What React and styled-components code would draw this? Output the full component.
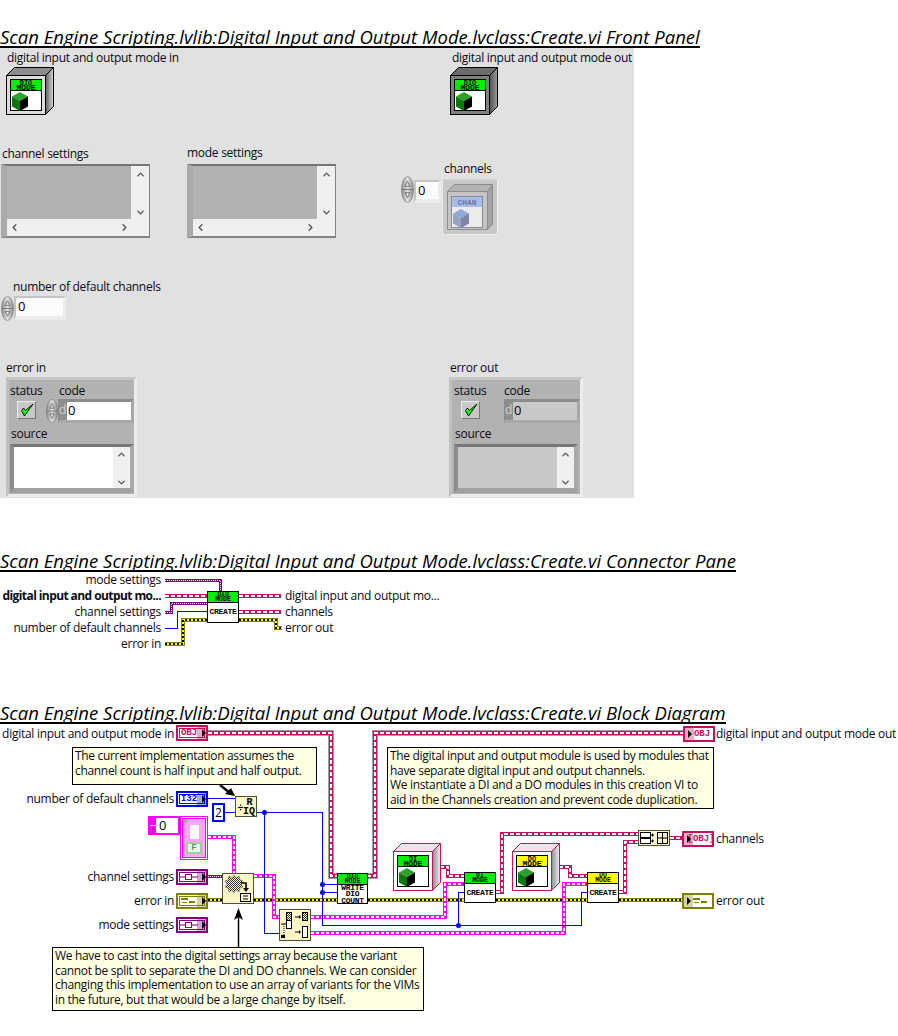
import React from 'react';
import styled, { createGlobalStyle } from 'styled-components';
import { ChevronUp, ChevronDown, ChevronLeft, ChevronRight } from 'lucide-react';

const GlobalStyle = createGlobalStyle`
	html, body { margin: 0; padding: 0; background: #fff; }
	body { font-family: 'Open Sans', 'Noto Sans', sans-serif; color: #0a0a14; }
`;

const PINK = '#c4105f';
const MAGENTA = '#ff00ff';
const PURPLE = '#800080';
const OLIVE = '#808000';
const BLUE = '#0000ff';

const wireKinds = {
	blue: [{ stroke: BLUE, width: 1 }],
	chain: [{ stroke: PINK, width: 4 }, { stroke: '#fff', width: 2, dash: '4 2' }],
	classBig: [
		{ stroke: '#a0a0a0', width: 6 },
		{ stroke: PINK, width: 4 },
		{ stroke: '#fff', width: 2, dash: '4 2' }
	],
	magenta: [{ stroke: MAGENTA, width: 4 }, { stroke: '#fff', width: 2, dash: '3 2' }],
	purple: [{ stroke: PURPLE, width: 3 }, { stroke: '#fff', width: 1, dash: '1 1' }],
	error: [
		{ stroke: OLIVE, width: 4 },
		{ stroke: '#ffff00', width: 2 },
		{ stroke: '#000', width: 2, dash: '2 2' }
	]
};

const Page = styled.div`
	width: 898px;
	height: 1036px;
	overflow: hidden;
	background: #fff;
	display: flex;
	flex-direction: column;
	align-items: flex-start;
`;

const Title = styled.h2`
	margin: ${({ $top }) => $top}px 0 0;
	height: 20px;
	font-size: 18.5px;
	line-height: 22px;
	font-weight: 400;
	font-style: italic;
	font-family: 'Open Sans', sans-serif;
	letter-spacing: 0.02px;
	white-space: nowrap;
	color: #000;
	border-bottom: 2px solid #000;
`;

const FrontPanel = styled.section`
	position: relative;
	width: 634px;
	height: 450px;
	background: #e1e1e1;
`;

const Canvas = styled.section`
	position: relative;
	width: 898px;
	height: ${({ $height }) => $height}px;
`;

const WireLayer = styled.svg`
	position: absolute;
	left: 0;
	top: 0;
	width: 100%;
	height: 100%;
`;

const Label = styled.div`
	position: absolute;
	left: ${({ $x }) => $x}px;
	top: ${({ $y }) => $y - 8}px;
	font-size: 12px;
	line-height: 16px;
	letter-spacing: ${({ $bold }) => ($bold ? -0.58 : -0.28)}px;
	white-space: nowrap;
	font-weight: ${({ $bold }) => ($bold ? 700 : 400)};
	transform: ${({ $right }) => ($right ? 'translateX(-100%)' : 'none')};
`;

const Placed = styled.div`
	position: absolute;
	left: ${({ $x }) => $x}px;
	top: ${({ $y }) => $y}px;
	line-height: 0;
`;

/* array shell with scrollbars */
const ArrayBox = styled.div`
	position: absolute;
	left: ${({ $x }) => $x}px;
	top: ${({ $y }) => $y}px;
	width: 149px;
	height: 74px;
	box-sizing: border-box;
	display: grid;
	grid-template-columns: 1fr 18px;
	grid-template-rows: 1fr 17px;
	background: #f0f0f0;
	border: solid #848484;
	border-width: 2px 1px 2px 6px;
	border-left-color: #aaaaaa;
	border-top-color: #747474;
`;

const ArrayData = styled.div`
	background: #b2b2b2;
`;

const ScrollV = styled.div`
	display: flex;
	flex-direction: column;
	justify-content: space-between;
	align-items: center;
	color: #555;
	padding: 3px 0 1px;
	line-height: 0;
`;

const ScrollH = styled.div`
	grid-column: 1 / 3;
	display: flex;
	justify-content: space-between;
	align-items: center;
	color: #555;
	padding: 0 19px 0 2px;
	line-height: 0;
`;

const NumericBox = styled.div`
	position: absolute;
	left: ${({ $x }) => $x}px;
	top: ${({ $y }) => $y}px;
	width: ${({ $w }) => $w}px;
	height: ${({ $h }) => $h}px;
	box-sizing: border-box;
	background: #fbfbfb;
	border: solid;
	border-width: 2px 3px 4px 2px;
	border-color: #c4c4c4 #ececec #ececec #c4c4c4;
	font-size: 13px;
	line-height: 16px;
	padding-left: 2px;
	color: #000;
`;

const ChannelFrame = styled.div`
	position: absolute;
	left: 442px;
	top: 131px;
	width: 56px;
	height: 56px;
	box-sizing: border-box;
	padding: 4px;
	line-height: 0;
	background: #c8c8c8;
	border: 1px solid #ececec;
	border-top-color: #d2d2d2;
`;

/* error cluster */
const ErrorFrame = styled.div`
	position: absolute;
	left: ${({ $x }) => $x}px;
	top: 329px;
	width: ${({ $w }) => $w}px;
	height: 120px;
	box-sizing: border-box;
	background: #b2b2b2;
	border: 3px solid;
	border-color: #c6c6c6 #ececec #ececec #c0c0c0;
	padding: 3px 0 0 ${({ $pad }) => $pad}px;
	display: grid;
	grid-template-columns: 36px 1fr;
	grid-template-rows: 16px 24px 21px 1fr;
	font-size: 12px;
	letter-spacing: -0.25px;
	line-height: 16px;
`;

const Cap = styled.div`
	padding-left: ${({ $indent }) => $indent || 0}px;
	white-space: nowrap;
`;

const CheckButton = styled.div`
	width: 19px;
	height: 18px;
	margin: 2px 0 0 7px;
	box-sizing: border-box;
	background: #c8c8c8;
	border: 1px solid;
	border-color: #eee #777 #777 #eee;
	display: flex;
	align-items: center;
	justify-content: center;
`;

const CodeRow = styled.div`
	display: flex;
	align-items: flex-start;
	margin-left: ${({ $indent }) => $indent || 0}px;
`;

const CodeBox = styled.div`
	width: 76px;
	height: 24px;
	box-sizing: border-box;
	display: flex;
	border: solid;
	border-width: 3px 3px 3px 1px;
	border-color: #8c8c8c #a8a8a8 #a8a8a8 #8c8c8c;
	font-size: 13px;
	line-height: 16px;
	color: #000;
`;

const RadixTag = styled.span`
	width: 8px;
	background: #8f8f8f;
	color: #cfcfcf;
	font-size: 12px;
`;

const CodeValue = styled.span`
	flex: 1;
	padding-left: 1px;
	background: ${({ $fill }) => $fill};
`;

const SourceCap = styled(Cap)`
	grid-column: 1 / 3;
	padding-left: 1px;
	padding-top: 3px;
`;

const SourceBox = styled.div`
	grid-column: 1 / 3;
	width: 124px;
	height: 49px;
	box-sizing: border-box;
	display: flex;
	justify-content: flex-end;
	background: ${({ $fill }) => $fill};
	border: solid;
	border-width: 3px 4px 5px 4px;
	border-color: #777 #a8a8a8 #a0a0a0 #8c8c8c;
`;

const SourceScroll = styled(ScrollV)`
	width: 17px;
	background: #f0f0f0;
	padding: 2px 0 0;
`;

/* LabVIEW nodes */
const ViNode = styled.div`
	position: absolute;
	left: ${({ $x }) => $x}px;
	top: ${({ $y }) => $y}px;
	width: ${({ $w }) => $w || 32}px;
	height: ${({ $h }) => $h || 32}px;
	box-sizing: border-box;
	border: 1px solid #000;
	background: #fff;
	display: flex;
	flex-direction: column;
	font-family: 'Liberation Mono', monospace;
	color: #000;
`;

const ViHead = styled.div`
	height: 11px;
	flex: none;
	box-sizing: border-box;
	overflow: hidden;
	background: ${({ $color }) => $color};
	border-bottom: 1px solid #000;
	font-size: 6.5px;
	font-weight: 700;
	line-height: 5px;
	text-align: center;
`;

const ViBody = styled.div`
	flex: 1;
	display: flex;
	align-items: center;
	justify-content: center;
	text-align: center;
	font-size: 8px;
	line-height: 6.3px;
	font-weight: 700;
	letter-spacing: -0.3px;
`;

const PrimNode = styled.div`
	position: absolute;
	left: ${({ $x }) => $x}px;
	top: ${({ $y }) => $y}px;
	width: ${({ $w }) => $w}px;
	height: ${({ $h }) => $h}px;
	box-sizing: border-box;
	background: #fbf7c8;
	border: 1px solid #505030;
	line-height: 0;
	font-family: 'Liberation Mono', monospace;
`;

const Terminal = styled.div`
	position: absolute;
	left: ${({ $x }) => $x}px;
	top: ${({ $y }) => $y}px;
	width: 32px;
	height: 16px;
	box-sizing: border-box;
	border: 2px solid ${({ $color }) => $color};
	background: #fff;
	color: ${({ $color }) => $color};
	display: flex;
	align-items: center;
	justify-content: center;
	padding: ${({ $indicator }) => ($indicator ? '0 0 0 6px' : '0 6px 0 0')};
	font-family: 'Liberation Mono', monospace;
	font-size: 9px;
	font-weight: 700;
	line-height: 0;
	overflow: hidden;
	&::before {
		content: '';
		position: absolute;
		inset: 1px;
		border: 1px solid ${({ $color, $indicator }) => ($indicator ? 'transparent' : $color)};
	}
`;

const TerminalShade = styled.span`
	position: absolute;
	top: 0;
	bottom: 0;
	width: 9px;
	${({ $indicator }) => ($indicator ? 'left: 0;' : 'right: 0;')}
	background: ${({ $color }) => $color};
	opacity: 0.35;
`;

const TerminalArrow = styled.span`
	position: absolute;
	top: 50%;
	margin-top: -4px;
	${({ $indicator }) => ($indicator ? 'left: 3px;' : 'right: 0;')}
	border-style: solid;
	border-width: 4px 0 4px 4px;
	border-color: transparent transparent transparent #000;
`;

const Note = styled.div`
	position: absolute;
	left: ${({ $x }) => $x}px;
	top: ${({ $y }) => $y}px;
	width: ${({ $w }) => $w}px;
	height: ${({ $h }) => $h}px;
	box-sizing: border-box;
	background: #ffffe1;
	border: 1px solid #000;
	padding: 1px 2px;
	font-size: 12px;
	line-height: 14.7px;
	letter-spacing: -0.32px;
	color: #0a0a14;
	white-space: pre;
`;

const ConstTwo = styled.div`
	position: absolute;
	left: 212px;
	top: 79px;
	width: 13px;
	height: 19px;
	box-sizing: border-box;
	border: 2px solid ${BLUE};
	background: #fff;
	font-size: 12px;
	line-height: 15px;
	text-align: center;
	color: #000;
`;

const ConstIndex = styled.div`
	position: absolute;
	left: 148px;
	top: 92px;
	width: 32px;
	height: 19px;
	box-sizing: border-box;
	border: 2px solid ${MAGENTA};
	background: #fff;
	display: flex;
	align-items: center;
	font-size: 13px;
	line-height: 15px;
	color: #000;
`;

const IndexSpin = styled.span`
	width: 6px;
	height: 15px;
	margin-right: 3px;
	background: linear-gradient(${MAGENTA} 45%, #fff 45%, #fff 55%, ${MAGENTA} 55%);
`;

const ConstArray = styled.div`
	position: absolute;
	left: 180px;
	top: 92px;
	width: 28px;
	height: 44px;
	box-sizing: border-box;
	border: 1px solid ${MAGENTA};
	padding: 1px;
	background: #fff;
`;

const ConstCluster = styled.div`
	position: relative;
	height: 100%;
	box-sizing: border-box;
	border: 1px solid ${MAGENTA};
	background: #fba6fb;
	padding: 6px 4px 3px;
	display: flex;
	flex-direction: column;
	align-items: center;
	gap: 3px;
`;

const ConstCorner = styled.span`
	position: absolute;
	left: 0;
	top: 0;
	border-style: solid;
	border-width: 7px 7px 0 0;
	border-color: #a8a8a8 transparent transparent transparent;
`;

const ConstWhite = styled.span`
	width: 9px;
	flex: 1;
	background: #fff;
`;

const ConstBool = styled.span`
	width: 16px;
	height: 12px;
	box-sizing: border-box;
	border: 2px solid #9ccf9c;
	background: #e8f4e8;
	color: #5a9a5a;
	font-family: 'Liberation Mono', monospace;
	font-size: 9px;
	font-weight: 700;
	line-height: 8px;
	text-align: center;
`;

const Wire = ({ kind, points }) => (
	<>
		{wireKinds[kind].map((layer, i) => (
			<polyline
				key={i}
				points={points.map(p => p.join(',')).join(' ')}
				fill="none"
				stroke={layer.stroke}
				strokeWidth={layer.width}
				strokeDasharray={layer.dash}
				shapeRendering="crispEdges"
			/>
		))}
	</>
);

const Spinner = ({ w = 13, h = 26 }) => (
	<svg width={w} height={h} viewBox="0 0 13 26" preserveAspectRatio="none">
		<defs>
			<linearGradient id="spin" x1="0" x2="1" y1="0" y2="0">
				<stop offset="0" stopColor="#8a8a8a" />
				<stop offset="0.5" stopColor="#e2e2e2" />
				<stop offset="1" stopColor="#8a8a8a" />
			</linearGradient>
		</defs>
		<ellipse cx="6.5" cy="13" rx="6" ry="12.5" fill="url(#spin)" stroke="#777" strokeWidth="0.6" />
		<path d="M0.8 13H12.2" stroke="#777" strokeWidth="1" />
		<path d="M6.5 5L9 10H4Z M6.5 21L9 16H4Z" fill="none" stroke="#666" strokeWidth="0.8" />
	</svg>
);

const Cube = ({ tone = 'green' }) => {
	const colors = {
		green: ['#2ea02e', '#0a780a', '#000'],
		blue: ['#8fa8dc', '#9aa2c4', '#7d84a4']
	}[tone];
	return (
		<>
			<polygon points="14,25 22,29.5 14,34 6,29.5" fill={colors[0]} />
			<polygon points="6,29.5 14,34 14,44 6,39.5" fill={colors[1]} />
			<polygon points="22,29.5 14,34 14,44 22,39.5" fill={colors[2]} />
		</>
	);
};

// the 3D class control or constant, face 40 square, 8 deep
const ClassIcon = ({ variant = 'light', head = '#00f000', line1 = 'DIO', line2 = 'MODE', id }) => {
	const look = {
		light: { edge: '#000', face: '#dcdcdc', top: '#8c8c8c', sideA: '#606060', sideB: '#d8d8d8' },
		dark: { edge: '#000', face: '#808080', top: '#6c6c6c', sideA: '#505050', sideB: '#9c9c9c' },
		constant: { edge: PINK, face: '#fff', top: '#f0e4e8', sideA: '#8c8c8c', sideB: '#f0f0f0' }
	}[variant];
	return (
		<svg width="48" height="48" viewBox="0 0 48 48">
			<defs>
				<linearGradient id={id} x1="0" x2="1" y1="0" y2="0">
					<stop offset="0" stopColor={look.sideA} />
					<stop offset="1" stopColor={look.sideB} />
				</linearGradient>
			</defs>
			<polygon points="0.5,8.5 8.5,0.5 47.5,0.5 39.5,8.5" fill={look.top} stroke={look.edge} />
			<polygon points="39.5,8.5 47.5,0.5 47.5,39.5 39.5,47.5" fill={`url(#${id})`} stroke={look.edge} />
			<rect x="0.5" y="8.5" width="39" height="39" fill={look.face} stroke={look.edge} />
			<rect x="4.5" y="12.5" width="31" height="31" fill="#fff" stroke="#000" />
			<rect x="5" y="13" width="30" height="10" fill={head} />
			<path d="M5 23.5H35" stroke="#000" />
			<text x="20" y="17.5" textAnchor="middle" fontFamily="Liberation Mono" fontSize="7" fontWeight="700">{line1}</text>
			<text x="20" y="23" textAnchor="middle" fontFamily="Liberation Mono" fontSize="8" fontWeight="700">{line2}</text>
			<Cube />
		</svg>
	);
};

const ChannelIcon = () => (
	<svg width="46" height="46" viewBox="0 0 46 46">
		<polygon points="0.5,7.5 7.5,0.5 45.5,0.5 40.5,7.5" fill="#b4b4b4" stroke="#8c8c8c" />
		<polygon points="40.5,7.5 45.5,0.5 45.5,40.5 40.5,45.5" fill="#a4a4a4" stroke="#8c8c8c" />
		<rect x="0.5" y="7.5" width="40" height="38" fill="#c4c4c4" stroke="#8c8c8c" />
		<rect x="4.5" y="12.5" width="31" height="31" fill="#ececec" stroke="#8c8c8c" />
		<rect x="5" y="13" width="30" height="10" fill="#a8bcec" />
		<text x="20" y="21" textAnchor="middle" fontFamily="Liberation Mono" fontSize="8" fontWeight="700" fill="#6c7c9c">CHAN</text>
		<Cube tone="blue" />
	</svg>
);

const Chevron = ({ as: Icon, size = 11 }) => <Icon size={size} strokeWidth={3} />;

const ScrollArray = ({ x, y }) => (
	<ArrayBox $x={x} $y={y}>
		<ArrayData />
		<ScrollV>
			<Chevron as={ChevronUp} />
			<Chevron as={ChevronDown} />
		</ScrollV>
		<ScrollH>
			<Chevron as={ChevronLeft} />
			<Chevron as={ChevronRight} />
		</ScrollH>
	</ArrayBox>
);

const ErrorCluster = ({ x, w, pad, indicator }) => (
	<ErrorFrame $x={x} $w={w} $pad={pad}>
		<Cap>status</Cap>
		<Cap $indent={indicator ? 14 : 13}>code</Cap>
		<CheckButton>
			<svg width="14" height="14" viewBox="0 0 14 14">
				<path d="M1.5 7.5L4.5 13 13 1 5.5 7.5 3.5 5Z" fill="#00ff00" stroke="#000" strokeWidth="0.9" strokeLinejoin="round" />
			</svg>
		</CheckButton>
		<CodeRow $indent={indicator ? 14 : 0}>
			{!indicator && <Spinner w={12} h={24} />}
			<CodeBox>
				<RadixTag>d</RadixTag>
				<CodeValue $fill={indicator ? '#c8c8c8' : '#fff'}>0</CodeValue>
			</CodeBox>
		</CodeRow>
		<SourceCap>source</SourceCap>
		<SourceBox $fill={indicator ? '#c8c8c8' : '#fff'}>
			<SourceScroll>
				<Chevron as={ChevronUp} />
				<Chevron as={ChevronDown} />
			</SourceScroll>
		</SourceBox>
	</ErrorFrame>
);

const Vi = ({ x, y, h = 32, w = 32, head = '#00f000', line1 = 'DIO', line2 = 'MODE', children }) => (
	<ViNode $x={x} $y={y} $w={w} $h={h}>
		<ViHead $color={head}>
			{line1}
			<br />
			{line2}
		</ViHead>
		<ViBody>{children}</ViBody>
	</ViNode>
);

const Term = ({ x, y, color, indicator, children }) => (
	<Terminal $x={x} $y={y} $color={color} $indicator={indicator}>
		{children}
		<TerminalShade $color={color} $indicator={indicator} />
		<TerminalArrow $indicator={indicator} />
	</Terminal>
);

const VariantGlyph = () => (
	<svg width="20" height="8" viewBox="0 0 20 8">
		<path d="M1 4H6 M13 4H19" stroke={PURPLE} />
		<rect x="6.5" y="1.5" width="6" height="5" fill="#fff" stroke={PURPLE} />
	</svg>
);

const ErrorGlyph = () => (
	<svg width="18" height="8" viewBox="0 0 18 8">
		<path d="M1 1H8V3H1Z M9 4H15V6H9Z M2 5H7V6H2Z" fill={OLIVE} />
	</svg>
);

const ConnectorPane = () => (
	<Canvas $height={84}>
		<WireLayer>
			<Wire kind="purple" points={[[165, 8.5], [220.5, 8.5], [220.5, 19]]} />
			<Wire kind="chain" points={[[165, 24], [207, 24]]} />
			<Wire kind="purple" points={[[165, 40.5], [171.5, 40.5], [171.5, 31.5], [207, 31.5]]} />
			<Wire kind="blue" points={[[165, 56.5], [177.5, 56.5], [177.5, 39.5], [207, 39.5]]} />
			<Wire kind="error" points={[[165, 72], [183, 72], [183, 48], [207, 48]]} />
			<Wire kind="chain" points={[[239, 24], [281, 24]]} />
			<Wire kind="chain" points={[[239, 40], [281, 40]]} />
			<Wire kind="error" points={[[239, 48], [276, 48], [276, 56], [282, 56]]} />
		</WireLayer>
		<Label $x={161} $y={8} $right>mode settings</Label>
		<Label $x={161} $y={24} $right $bold>digital input and output mo...</Label>
		<Label $x={161} $y={40} $right>channel settings</Label>
		<Label $x={161} $y={56} $right>number of default channels</Label>
		<Label $x={161} $y={72} $right>error in</Label>
		<Vi x={207} y={19}>CREATE</Vi>
		<Label $x={285} $y={24}>digital input and output mo...</Label>
		<Label $x={285} $y={40}>channels</Label>
		<Label $x={285} $y={56}>error out</Label>
	</Canvas>
);

const BlockDiagram = () => (
	<Canvas $height={312}>
		<WireLayer>
			<Wire kind="classBig" points={[[208, 9], [331, 9], [331, 152], [337, 152]]} />
			<Wire kind="classBig" points={[[367, 152], [375, 152], [375, 9], [683, 9]]} />
			<Wire kind="chain" points={[[440, 143], [448, 143], [448, 152], [464, 152]]} />
			<Wire kind="chain" points={[[496, 168], [502, 168], [502, 110], [638, 110]]} />
			<Wire kind="chain" points={[[559, 143], [570, 143], [570, 152], [587, 152]]} />
			<Wire kind="chain" points={[[619, 168], [625, 168], [625, 118], [638, 118]]} />
			<Wire kind="chain" points={[[670, 114], [682, 114]]} />
			<Wire kind="purple" points={[[208, 152.5], [222, 152.5]]} />
			<Wire kind="error" points={[[208, 176], [222, 176]]} />
			<Wire kind="error" points={[[254, 176], [337, 176]]} />
			<Wire kind="error" points={[[368, 176], [464, 176]]} />
			<Wire kind="error" points={[[496, 176], [587, 176]]} />
			<Wire kind="error" points={[[619, 176], [682, 176]]} />
			<Wire kind="magenta" points={[[208, 113], [234, 113], [234, 149]]} />
			<Wire kind="magenta" points={[[254, 152], [274, 152], [274, 193], [279, 193]]} />
			<Wire kind="magenta" points={[[311, 193], [445, 193], [445, 160], [464, 160]]} />
			<Wire kind="magenta" points={[[311, 209], [564, 209], [564, 160], [587, 160]]} />
			<Wire kind="blue" points={[[208, 74.5], [235, 74.5]]} />
			<Wire kind="blue" points={[[225, 88.5], [235, 88.5]]} />
			<Wire kind="blue" points={[[257, 88.5], [322.5, 88.5], [322.5, 201.5], [581.5, 201.5], [581.5, 168.5], [587, 168.5]]} />
			<Wire kind="blue" points={[[458.5, 201.5], [458.5, 168.5], [464, 168.5]]} />
			<Wire kind="blue" points={[[264.5, 88.5], [264.5, 209.5], [279, 209.5]]} />
			<Wire kind="blue" points={[[322.5, 160.5], [337, 160.5]]} />
			<Wire kind="blue" points={[[322.5, 168.5], [337, 168.5]]} />
			<g fill={BLUE}>
				<circle cx="264.5" cy="88.5" r="2.5" />
				<circle cx="322.5" cy="160.5" r="2.5" />
				<circle cx="322.5" cy="168.5" r="2.5" />
				<circle cx="458.5" cy="201.5" r="2.5" />
			</g>
			<path d="M220 61L230 69" stroke="#000" strokeWidth="2.5" />
			<path d="M235 72L225 70 231 64Z" fill="#000" />
			<path d="M238.5 223V192" stroke="#000" strokeWidth="1.5" />
			<path d="M238.5 184L234 196 238.5 193 243 196Z" fill="#000" />
			<rect x="463" y="158" width="3" height="3" fill="#f00" />
			<rect x="586" y="158" width="3" height="3" fill="#f00" />
		</WireLayer>

		<Label $x={174} $y={10} $right>digital input and output mode in</Label>
		<Term x={176} y={1} color={PINK}>OBJ</Term>
		<Note $x={72} $y={23} $w={245} $h={38}>{'The current implementation assumes the\nchannel count is half input and half output.'}</Note>

		<Label $x={174} $y={75} $right>number of default channels</Label>
		<Term x={176} y={67} color={BLUE}>I32</Term>
		<ConstTwo>2</ConstTwo>
		<PrimNode $x={235} $y={72} $w={22} $h={21}>
			<svg width="20" height="19" viewBox="0 0 20 19">
				<path d="M2 10.5H7" stroke="#000" strokeWidth="1.2" />
				<rect x="4" y="7.5" width="1.2" height="1.2" fill="#000" />
				<rect x="4" y="12" width="1.2" height="1.2" fill="#000" />
				<text x="13.5" y="8" textAnchor="middle" fontFamily="Liberation Mono" fontSize="10" fontWeight="700">R</text>
				<text x="13" y="17" textAnchor="middle" fontFamily="Liberation Mono" fontSize="10" fontWeight="700">IQ</text>
			</svg>
		</PrimNode>

		<ConstIndex>
			<IndexSpin />
			0
		</ConstIndex>
		<ConstArray>
			<ConstCluster>
				<ConstCorner />
				<ConstWhite />
				<ConstBool>F</ConstBool>
			</ConstCluster>
		</ConstArray>

		<Label $x={174} $y={153} $right>channel settings</Label>
		<Term x={176} y={145} color={PURPLE}><VariantGlyph /></Term>
		<Label $x={174} $y={177} $right>error in</Label>
		<Term x={176} y={169} color={OLIVE}><ErrorGlyph /></Term>
		<Label $x={174} $y={201} $right>mode settings</Label>
		<Term x={176} y={193} color={PURPLE}><VariantGlyph /></Term>

		<PrimNode $x={222} $y={149} $w={32} $h={31}>
			<svg width="30" height="29" viewBox="0 0 30 29">
				<defs>
					<pattern id="gear" width="2" height="2" patternUnits="userSpaceOnUse">
						<rect width="1" height="1" fill="#333" />
						<rect x="1" y="1" width="1" height="1" fill="#333" />
					</pattern>
				</defs>
				<path d="M12 1L14 4 17 2 18 6 21 7 19 10 21 13 18 14 17 18 14 16 12 19 10 16 7 18 6 14 3 13 5 10 3 7 6 6 7 2 10 4Z" fill="url(#gear)" stroke="#555" strokeWidth="0.5" transform="translate(-1 0)" />
				<path d="M18 9H23V15" fill="none" stroke="#000" strokeWidth="1.6" />
				<path d="M20 14H26L23 18Z" fill="#000" />
				<rect x="17.5" y="19.5" width="10" height="8" fill="none" stroke="#000" />
				<path d="M20 22H25 M20 25H25" stroke="#000" />
			</svg>
		</PrimNode>

		<PrimNode $x={279} $y={185} $w={32} $h={32}>
			<svg width="30" height="30" viewBox="0 0 30 30">
				<rect x="6.5" y="2.5" width="5" height="8" fill="url(#gear)" stroke="#000" />
				<rect x="6.5" y="10.5" width="5" height="8" fill="#fff" stroke="#000" />
				<rect x="22.5" y="2.5" width="5" height="8" fill="url(#gear)" stroke="#000" />
				<rect x="22.5" y="16.5" width="5" height="11" fill="#fff" stroke="#000" />
				<path d="M15 7H19 M15 22H19" stroke="#000" />
				<path d="M19 5L21 7 19 9Z M19 20L21 22 19 24Z" fill="#000" />
				<path d="M4 14V26" stroke="#000" strokeDasharray="1 1" />
				<rect x="1" y="25" width="4" height="3" fill="#000" />
				<path d="M1 14H6" stroke="#000" />
			</svg>
		</PrimNode>

		<Vi x={337} y={149} w={31} h={31}>
			<span>WRITE<br />DIO<br />COUNT</span>
		</Vi>

		<Placed $x={393} $y={119}><ClassIcon variant="constant" id="di" line1="DI" /></Placed>
		<Vi x={464} y={148} h={31} line1="DI">CREATE</Vi>
		<Placed $x={512} $y={119}><ClassIcon variant="constant" id="do" line1="DO" head="#ffff00" /></Placed>
		<Vi x={587} y={148} h={31} line1="DO" head="#ffff00">CREATE</Vi>

		<PrimNode $x={638} $y={106} $w={32} $h={16}>
			<svg width="30" height="14" viewBox="0 0 30 14">
				<rect x="1.5" y="1.5" width="10" height="5" fill="#fff" stroke="#000" />
				<rect x="1.5" y="7.5" width="10" height="5" fill="#fff" stroke="#000" />
				<path d="M12 4H15 M13.5 2.5V5.5 M12 10H15 M13.5 8.5V11.5" stroke="#000" />
				<rect x="18.5" y="1.5" width="10" height="11" fill="none" stroke="#000" />
				<path d="M18.5 7H28.5 M23.5 1.5V12.5" stroke="#000" />
			</svg>
		</PrimNode>

		<Term x={683} y={2} color={PINK} indicator>OBJ</Term>
		<Label $x={716} $y={10}>digital input and output mode out</Label>
		<Note $x={387} $y={23} $w={327} $h={62}>{'The digital input and output module is used by modules that\nhave separate digital input and output channels.\nWe instantiate a DI and a DO modules in this creation VI to\naid in the Channels creation and prevent code duplication.'}</Note>
		<Term x={682} y={107} color={PINK} indicator>[OBJ]</Term>
		<Label $x={716} $y={115}>channels</Label>
		<Term x={682} y={169} color={OLIVE} indicator><ErrorGlyph /></Term>
		<Label $x={716} $y={177}>error out</Label>

		<Note $x={52} $y={223} $w={372} $h={64}>{'We have to cast into the digital settings array because the variant\ncannot be split to separate the DI and DO channels. We can consider\nchanging this implementation to use an array of variants for the VIMs\nin the future, but that would be a large change by itself.'}</Note>
	</Canvas>
);

const App = () => (
	<Page>
		<GlobalStyle />
		<Title $top={26}>Scan Engine Scripting.lvlib:Digital Input and Output Mode.lvclass:Create.vi Front Panel</Title>
		<FrontPanel>
			<Label $x={7} $y={10}>digital input and output mode in</Label>
			<Placed $x={6} $y={19}><ClassIcon id="modeIn" /></Placed>
			<Label $x={452} $y={10}>digital input and output mode out</Label>
			<Placed $x={450} $y={19}><ClassIcon variant="dark" id="modeOut" /></Placed>

			<Label $x={2} $y={106}>channel settings</Label>
			<ScrollArray x={1} y={116} />
			<Label $x={187} $y={105}>mode settings</Label>
			<ScrollArray x={187} y={116} />

			<Label $x={444} $y={121}>channels</Label>
			<Placed $x={401} $y={128}><Spinner w={13} h={27} /></Placed>
			<NumericBox $x={414} $y={132} $w={27} $h={23}>0</NumericBox>
			<ChannelFrame><ChannelIcon /></ChannelFrame>

			<Label $x={13} $y={239}>number of default channels</Label>
			<Placed $x={1} $y={248}><Spinner w={13} h={25} /></Placed>
			<NumericBox $x={14} $y={248} $w={52} $h={24}>0</NumericBox>

			<Label $x={6} $y={320}>error in</Label>
			<ErrorCluster x={6} w={131} pad={1} />
			<Label $x={450} $y={320}>error out</Label>
			<ErrorCluster x={449} w={134} pad={2} indicator />
		</FrontPanel>
		<Title $top={52}>Scan Engine Scripting.lvlib:Digital Input and Output Mode.lvclass:Create.vi Connector Pane</Title>
		<ConnectorPane />
		<Title $top={46}>Scan Engine Scripting.lvlib:Digital Input and Output Mode.lvclass:Create.vi Block Diagram</Title>
		<BlockDiagram />
	</Page>
);

export default App;
